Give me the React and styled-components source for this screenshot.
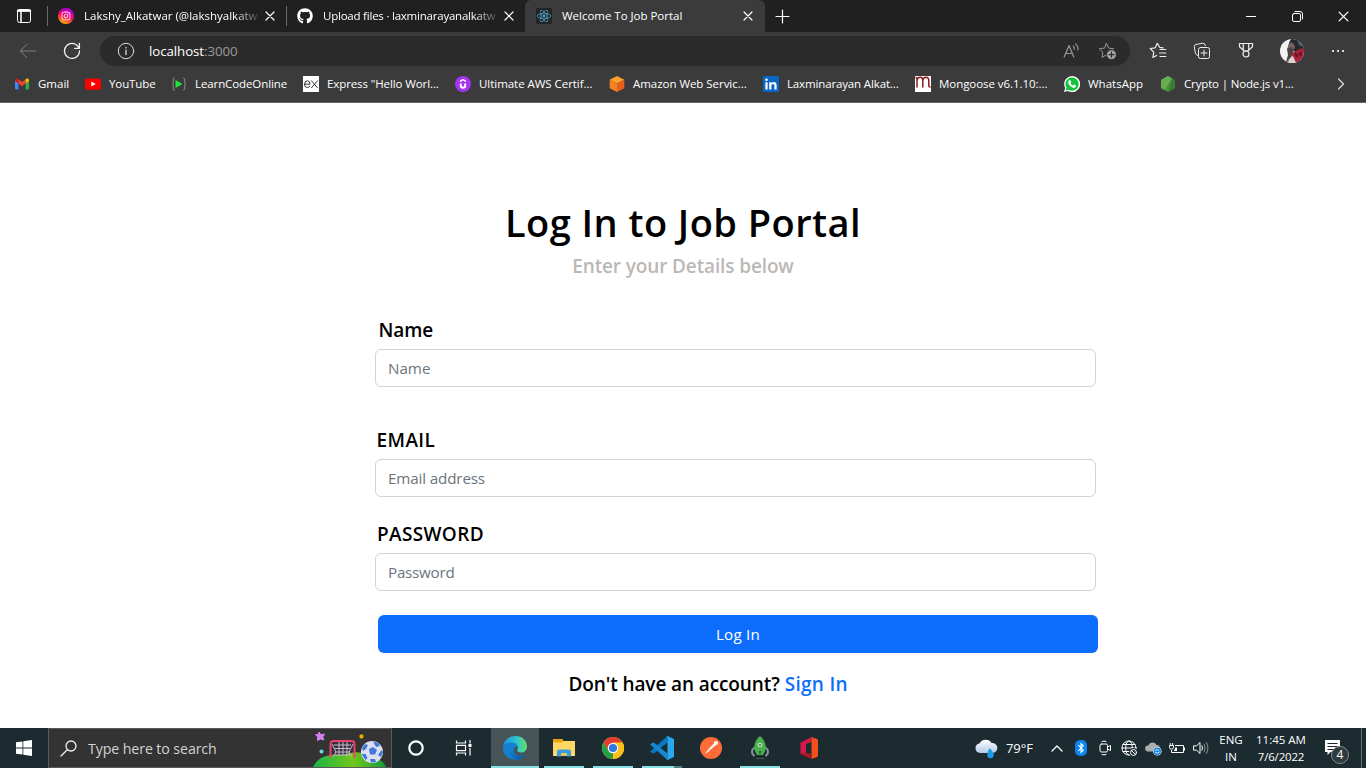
import React from "react";
import styled, { createGlobalStyle } from "styled-components";
import { FaGithub, FaReact, FaInstagram } from "react-icons/fa";

const Global = createGlobalStyle`
  * { box-sizing: border-box; }
  html, body { margin: 0; height: 768px; overflow: hidden; background: #fff; }
  body { font-family: "Open Sans", "Noto Sans", sans-serif; }
  svg { display: block; flex: none; }
  input, button { font-family: inherit; }
`;

const Screen = styled.div`
  width: 1366px;
  height: 768px;
  display: flex;
  flex-direction: column;
  overflow: hidden;
`;

const Text = styled.span`
  font-size: ${(p) => p.$size || 11.5}px;
  letter-spacing: ${(p) => p.$track || 0}px;
  color: ${(p) => p.$color || "#fff"};
  white-space: nowrap;
`;

/* ---------- Browser chrome ---------- */

const TabStrip = styled.header`
  height: 32px;
  flex: none;
  display: flex;
  align-items: center;
  background: #202020;
`;

const TabActions = styled.div`
  width: 47px;
  height: 32px;
  display: flex;
  align-items: center;
  justify-content: center;
`;

const Tab = styled.div`
  width: ${(p) => p.$width}px;
  height: 32px;
  display: flex;
  align-items: center;
  padding-left: ${(p) => p.$inset || 10}px;
  border-radius: ${(p) => (p.$active ? "6px 6px 0 0" : "0")};
  background: ${(p) => (p.$active ? "#3b3b3b" : "transparent")};
`;

const TabTitle = styled.div`
  width: 176px;
  margin: 0 5px 0 10px;
  line-height: 20px;
  white-space: nowrap;
  display: flex;
  ${(p) => p.$fade && "mask-image: linear-gradient(90deg, #000 150px, transparent 178px);"}
`;

const Separator = styled.div`
  width: 1px;
  height: 20px;
  background: #6b6b6b;
`;

const NewTab = styled.div`
  width: 34px;
  display: flex;
  justify-content: center;
`;

const WindowControls = styled.div`
  margin-left: auto;
  display: flex;
`;

const WindowButton = styled.div`
  width: 46px;
  height: 32px;
  display: flex;
  align-items: center;
  justify-content: center;
`;

const Toolbar = styled.div`
  height: 37px;
  flex: none;
  display: flex;
  align-items: center;
  padding-left: 16px;
  background: #3b3b3b;
`;

const ToolButton = styled.div`
  width: ${(p) => p.$width || 44}px;
  height: 30px;
  display: flex;
  align-items: center;
  justify-content: ${(p) => p.$align || "flex-start"};
`;

const AddressBar = styled.div`
  width: 1030px;
  height: 30px;
  margin-top: 1px;
  padding: 0 13px 0 17px;
  display: flex;
  align-items: center;
  border-radius: 15px;
  background: #2b2b2b;
`;

const Url = styled.div`
  margin-left: 14px;
  flex: 1;
  display: flex;
`;

const AddressActions = styled.div`
  display: flex;
  gap: 18px;
`;

const Bookmarks = styled.nav`
  height: 34px;
  flex: none;
  display: flex;
  align-items: center;
  padding: 0 0 4px 14px;
  background: #3b3b3b;
  border-bottom: 1px solid #666;
`;

const Bookmark = styled.div`
  width: ${(p) => p.$width}px;
  display: flex;
  align-items: center;
  gap: 8px;
`;

const More = styled.div`
  margin-left: auto;
  padding-right: 21px;
`;

const Avatar = styled.div`
  width: 24px;
  height: 24px;
  border-radius: 50%;
  overflow: hidden;
`;

/* ---------- Login page ---------- */

const Page = styled.main`
  flex: 1;
  background: #fff;
  display: flex;
  flex-direction: column;
`;

const Title = styled.h1`
  margin: 95px 0 0;
  height: 48px;
  font-size: 38px;
  line-height: 48px;
  font-weight: 600;
  letter-spacing: ${(p) => p.$track}px;
  text-align: center;
  color: #000;
`;

const Subtitle = styled.h5`
  margin: 8px 0 0;
  height: 24px;
  font-size: 19px;
  line-height: 24px;
  font-weight: 600;
  letter-spacing: ${(p) => p.$track}px;
  text-align: center;
  color: #bbb8b6;
`;

const Form = styled.form`
  margin: 40px 0 0 375px;
  width: 723px;
  display: flex;
  flex-direction: column;
`;

const Field = styled.div`
  display: flex;
  flex-direction: column;
  margin-bottom: ${(p) => p.$gap}px;
`;

const Label = styled.label`
  height: 24px;
  margin: 0 0 7px;
  padding-left: ${(p) => p.$inset}px;
  font-size: 19px;
  line-height: 24px;
  font-weight: 600;
  letter-spacing: ${(p) => p.$track}px;
  color: #000;
`;

const Input = styled.input`
  width: 721px;
  height: 38px;
  padding: 0 12px;
  border: 1px solid #ced4da;
  border-radius: 6px;
  font-size: 15.2px;
  letter-spacing: ${(p) => p.$track}px;
  background: #fff;
  &::placeholder { color: #6c757d; opacity: 1; }
`;

const Submit = styled.button`
  width: 720px;
  height: 38px;
  margin-left: 3px;
  padding: 0;
  border: 0;
  border-radius: 6px;
  background: #0d6efd;
  color: #fff;
  font-size: 15.2px;
  letter-spacing: ${(p) => p.$track}px;
`;

const Prompt = styled.p`
  margin: 19px 0 0 193.5px;
  height: 24px;
  display: flex;
  gap: 5px;
  font-size: 19px;
  line-height: 24px;
  font-weight: 600;
  letter-spacing: ${(p) => p.$track}px;
  white-space: nowrap;
  color: #000;
`;

const PromptLink = styled.a`
  color: #0d6efd;
  letter-spacing: 0.3px;
`;

/* ---------- Taskbar ---------- */

const Taskbar = styled.footer`
  height: 40px;
  flex: none;
  display: flex;
  background: #1b2b30;
`;

const Start = styled.div`
  width: 48px;
  display: flex;
  align-items: center;
  justify-content: center;
`;

const Search = styled.div`
  width: 344px;
  height: 40px;
  display: flex;
  align-items: center;
  border: 1px solid #5a5a5a;
  padding-left: 11px;
  background: #333;
`;

const SearchText = styled.div`
  flex: 1;
  margin-left: 11px;
  display: flex;
`;

const TaskButton = styled.div`
  width: ${(p) => p.$width}px;
  height: 40px;
  display: flex;
  align-items: center;
  justify-content: center;
  padding-right: ${(p) => p.$nudge || 0}px;
`;

const RunningApp = styled.div`
  width: ${(p) => (p.$active ? 48 : 40)}px;
  height: 40px;
  margin-right: ${(p) => (p.$active ? 5 : 9)}px;
  display: flex;
  align-items: center;
  justify-content: center;
  background: ${(p) => (p.$active ? "#465458" : "transparent")};
  border-bottom: 2px solid ${(p) => (p.$idle ? "transparent" : "#88e0e4")};
  ${(p) => p.$stacked && "border-image: linear-gradient(90deg, #88e0e4 31px, #527d82 31px) 2;"}
  svg { margin-top: 2px; }
`;

const Tray = styled.div`
  margin-left: auto;
  display: flex;
  align-items: center;
`;

const TrayItem = styled.div`
  width: ${(p) => p.$width || 24}px;
  display: flex;
  align-items: center;
  justify-content: center;
  padding-right: ${(p) => p.$nudge || 0}px;
`;

const Stack = styled.div`
  width: ${(p) => p.$width}px;
  display: flex;
  flex-direction: column;
  align-items: center;
  line-height: 17px;
`;

const Notification = styled.div`
  position: relative;
  width: 48px;
  height: 40px;
  padding: 11px 0 0 11px;
`;

const Badge = styled.span`
  position: absolute;
  left: 18px;
  top: 18px;
  width: 18px;
  height: 18px;
  border: 1px solid #858b8c;
  border-radius: 50%;
  background: #303a3d;
  color: #fff;
  font-size: 12px;
  line-height: 16px;
  text-align: center;
`;

const DesktopEdge = styled.div`
  width: 5px;
  height: 40px;
  border-left: 1px solid #627075;
`;

/* ---------- Icons ---------- */

const Line = ({ w = 16, h = 16, box, color = "#fff", sw = 1, children }) => (
  <svg width={w} height={h} viewBox={box || `0 0 ${w} ${h}`} fill="none" stroke={color} strokeWidth={sw} strokeLinecap="round" strokeLinejoin="round">
    {children}
  </svg>
);

const CloseIcon = ({ size = 10 }) => (
  <Line w={size} h={size} box="0 0 10 10" sw={1.2}><path d="M1 1l8 8M9 1L1 9" /></Line>
);

const InstaIcon = () => (
  <svg width="16" height="16" viewBox="0 0 16 16">
    <defs>
      <linearGradient id="insta" x1="0.7" y1="0" x2="0.3" y2="1">
        <stop offset="0" stopColor="#a000e8" /><stop offset="0.5" stopColor="#f40870" /><stop offset="0.8" stopColor="#ff6b16" /><stop offset="1" stopColor="#ffc800" />
      </linearGradient>
    </defs>
    <circle cx="8" cy="8" r="8" fill="url(#insta)" />
    <FaInstagram x="3" y="3" size={10} color="#fff" />
  </svg>
);

const ReactBadge = () => (
  <svg width="16" height="16" viewBox="0 0 16 16">
    <rect width="16" height="16" rx="1.5" fill="#20232a" />
    <FaReact x="1" y="1" size={14} color="#4fb0ca" />
  </svg>
);

const GmailIcon = () => (
  <svg width="16" height="16" viewBox="0 0 16 16">
    <path d="M1 4v8.5q0 1 1 1h2.4V6.8z" fill="#4285f4" />
    <path d="M15 4v8.5q0 1-1 1h-2.4V6.8z" fill="#34a853" />
    <path d="M4.4 3.2L8 6l3.6-2.8v4.3L8 10.3 4.4 7.5z" fill="#ea4335" />
    <path d="M1 4.2C1 2.5 2.8 2 4 2.9l.4.3v4.3L1 5z" fill="#c5221f" />
    <path d="M15 4.2c0-1.7-1.8-2.2-3-1.3l-.4.3v4.3L15 5z" fill="#fbbc04" />
  </svg>
);

const YouTubeIcon = () => (
  <svg width="16" height="16" viewBox="0 0 16 16">
    <rect x="0" y="2.4" width="16" height="11.4" rx="2.8" fill="#f00" />
    <path d="M6.3 5.6v5L10.7 8z" fill="#fff" />
  </svg>
);

const LearnIcon = () => (
  <svg width="16" height="16" viewBox="0 0 16 16">
    <path d="M4 2Q2.300 2 2.300 4v2.500Q2.300 8 1 8q1.300 0 1.300 1.500V12q0 2 1.700 2M12 2q1.700 0 1.700 2v2.500Q13.700 8 15 8q-1.300 0-1.300 1.500V12q0 2-1.700 2" fill="none" stroke="#7d7d7d" strokeWidth="1.2" />
    <path d="M4.500 4v8l7-4z" fill="#22e23c" />
  </svg>
);

const ExpressIcon = () => (
  <Line color="#333">
    <rect width="16" height="16" fill="#fff" stroke="none" />
    <path d="M1.500 8.200H7Q7 4.800 4.300 4.800T1.500 8.300Q1.500 11.500 4.300 11.500 6.200 11.500 6.800 10.200M8.500 4.800l6 7M14.500 4.800l-6 7" />
  </Line>
);

const UdemyIcon = () => (
  <Line color="#fff" sw={2}>
    <circle cx="8" cy="8" r="8" fill="#a435f0" stroke="none" />
    <path d="M5.800 7.500v2.300q0 2 2.200 2t2.200-2V7.500" strokeLinecap="butt" />
    <path d="M5.500 5.200L8 3.700l2.500 1.500" strokeWidth="1.4" />
  </Line>
);

const AwsIcon = () => (
  <svg width="16" height="16" viewBox="0 0 16 16">
    <path d="M8 0l7.300 3.700L8 7.500.7 3.700z" fill="#ffa12b" />
    <path d="M.7 3.700L8 7.500V16L.7 12.200z" fill="#f58220" />
    <path d="M15.300 3.700L8 7.500V16l7.300-3.800z" fill="#e8601c" />
  </svg>
);

const LinkedInIcon = () => (
  <svg width="16" height="16" viewBox="0 0 16 16">
    <rect width="16" height="16" rx="1" fill="#0a66c2" />
    <circle cx="3.500" cy="3.700" r="1.300" fill="#fff" />
    <path d="M2.400 6.200h2.200v7.300H2.400zM6.200 6.200h2.100v1Q9 6 10.600 6q3 0 3 3.300v4.200h-2.200V9.700q0-1.800-1.400-1.800-1.600 0-1.600 1.900v3.700H6.200z" fill="#fff" />
  </svg>
);

const MongooseIcon = () => (
  <Line color="#8d1a1a" sw={1.5}>
    <rect width="16" height="16" fill="#fff" stroke="none" />
    <path d="M2 11V3Q2 1.800 1 1.500M2 4q.8-2.700 3.200-2.700T7.800 4v7M7.800 4q.8-2.700 3.200-2.700T13.800 4v6q0 1 1.200 1" />
  </Line>
);

const WhatsAppIcon = () => (
  <svg width="16" height="16" viewBox="0 0 16 16">
    <path d="M0 16l1.200-4A8 8 0 1 1 4 14.900z" fill="#fff" />
    <path d="M1.500 14.500l.9-3A6.600 6.600 0 1 1 4.600 13.700z" fill="#12c23c" />
    <path d="M5.200 4.200l1-.1 1 2.100-.7 1q.9 1.700 2.600 2.400l.9-1 2 1q.1 1.700-1.500 2.200-2 .5-4.400-1.700T4.200 5.800q.1-1 1-1.600z" fill="#fff" />
  </svg>
);

const NodeIcon = () => (
  <svg width="16" height="16" viewBox="0 0 16 16">
    <path d="M8 0l7 4v8l-7 4-7-4V4z" fill="#4d9341" /><path d="M1 4l7-4 4 2.300L4.500 14 1 12z" fill="#6cac50" /><path d="M8 16l7-4V4l-3-1.700z" fill="#3c7b37" />
  </svg>
);

const InfoIcon = () => (
  <Line w={18} h={18} color="#ddd"><circle cx="9" cy="9" r="7.700" /><path d="M9 8.200v4.300M9 5.500v.4" strokeWidth="1.300" /></Line>
);

const BackIcon = () => <Line w={24} h={18} color="#818181"><path d="M20 9H4.500M11 2.200L4.300 9l6.700 6.800" /></Line>;

const ReloadIcon = () => (
  <Line w={18} h={18} color="#f4f4f4" sw={1.300}><path d="M16 6.200A7.500 7.500 0 1 0 16.500 9M16.400 1.500v4.800h-4.800" /></Line>
);

const ReadAloudIcon = () => (
  <Line w={17} h={18} color="#999" sw={1.200}><path d="M1.200 15L6 3.500 10.800 15M2.800 11.500h6.500M10.300 4.200q1.200 1.200 1 3M12.500 1.900q3 2.400 2.400 6" /></Line>
);

const starPath = "M8.500 1.500l2.200 4.600 5 .7-3.600 3.500.9 5-4.500-2.400-4.500 2.400.9-5L1.300 6.800l5-.7z";

const AddStarIcon = () => (
  <Line w={19} h={18} color="#999">
    <path d={starPath} />
    <circle cx="13.500" cy="12.700" r="5" fill="#a5a5a5" stroke="#2b2b2b" />
    <path d="M13.500 10.200v5M11 12.700h5" stroke="#2b2b2b" strokeWidth="1.200" />
  </Line>
);

const FavoritesIcon = () => (
  <Line w={18} h={18} color="#eee" sw={1.200}><path d="M14 5.800l-3.400-.5L8.300 1.300 6.200 5.800l-5 .7 3.600 3.700-.9 5.300 3.700-2.100M11 7.500h5.800M10.500 11h6.300M11 14.500h5.800" /></Line>
);

const CollectionsIcon = () => (
  <Line w={18} h={18} color="#eee">
    <path d="M4.700 13.500Q2.600 12.700 2.300 10.500L1.300 4.800Q1 3 3 2.500l6.500-1.300Q12 .9 12.400 3.500" />
    <rect x="5.500" y="5.500" width="11" height="11" rx="2" /><path d="M11 8v6M8 11h6" />
  </Line>
);

const RewardsIcon = () => (
  <Line w={16} h={17} color="#eee" sw={1.200}><path d="M1.500 1.500h13v3.300L9.800 9H6.200L1.500 4.800zM5.300 1.500V8M10.700 1.500V8" /><circle cx="8" cy="12" r="3" /></Line>
);

const AvatarArt = () => (
  <svg width="24" height="24" viewBox="0 0 24 24">
    <rect width="24" height="24" fill="#f3f1f1" />
    <path d="M11 0h13v12l-8 2-4-4-4-1 1-5z" fill="#23292c" />
    <path d="M9 5l3-2 3 4-1 4-4 1-3-2z" fill="#7a5f5c" />
    <path d="M7 10l4-2 3 3-2 5-2 6-4 1 2-7z" fill="#4c4246" />
    <path d="M12 14l4-2 6-3 2 2v9l-7 4-5-4z" fill="#b02038" />
    <path d="M15 14l3 1 0 4-3-2zM20 12l2 2-1 4-2-2z" fill="#5d1720" />
    <path d="M9 20l4-3 3 7H8z" fill="#d9d4d5" />
    <path d="M17 1q5 3 6 7l-4-2z" fill="#50686c" />
  </svg>
);

const WindowsIcon = () => (
  <svg width="16" height="16" viewBox="0 0 16 16" fill="#fff"><path d="M0 2.300l6.500-.9v6.200H0zM7.300 1.300L16 0v7.600H7.300zM0 8.400h6.500v6.200L0 13.700zM7.300 8.400H16V16l-8.700-1.300z" /></svg>
);

const SearchIcon = () => <Line w={17} h={17} color="#eee" sw={1.300}><circle cx="11" cy="6" r="5" /><path d="M7.300 9.700L1 16" /></Line>;

const SoccerArt = () => (
  <svg width="79" height="38" viewBox="0 0 79 38">
    <defs><linearGradient id="hill"><stop offset="0" stopColor="#19b448" /><stop offset="0.55" stopColor="#70c719" /><stop offset="1" stopColor="#119d3c" /></linearGradient></defs>
    <path d="M1 38C7 26 18 25 31 26c13-5 22-3 30 3 7 1 11 4 13 9z" fill="url(#hill)" />
    <path d="M7 3l2 2.800L12.500 5l-1.800 3L12 11 8.500 10 5.500 11.500 5.800 8 3.500 5.500 6.500 5.500z" fill="#d583f0" stroke="#d583f0" strokeLinejoin="round" />
    <rect x="47.500" y="5.500" width="4" height="4" rx="1.400" fill="#f5a800" />
    <circle cx="9.500" cy="22.500" r="2" fill="#72d4dc" />
    <path d="M20 15l4 8-3 5M41 15l-4 8 3 5M22 16h17M23 19.500h15M23 23h15M27 13v13M31 13v13M35 13v13M23 26h15" fill="none" stroke="#cdb8d6" />
    <path d="M18.500 28V15q0-3 3-3h18q3 0 3 3v13" fill="none" stroke="#ef3f72" strokeWidth="2" strokeLinecap="round" />
    <circle cx="60" cy="23" r="11" fill="#dcdff0" />
    <path d="M57 20l4-2 4 3-2 4.500-5 0zM50 19l3-4 3 1-2 4-3 2zM61 12.500l5 1.500 2 3-4 1zM69.500 21l1.500 2-2 5-3-2zM49.500 25l4 0 2 4-2 2zM58 30l5 0 1 3-5 .5z" fill="#3e78df" />
  </svg>
);

const CortanaIcon = () => <Line w={18} h={18} sw={2.200}><circle cx="9" cy="9" r="6.700" /></Line>;

const TaskViewIcon = () => (
  <Line w={17} h={16} sw={1.200}>
    <path d="M1.500 .5v2.500h9V.5M1.500 15.500V13h9v2.500M1.500 5.300h9v5.400h-9zM15 0v3.500M15 8v7.500" strokeLinecap="butt" strokeLinejoin="miter" /><rect x="13.500" y="4" width="3" height="3" fill="#fff" stroke="none" />
  </Line>
);

const EdgeIcon = () => (
  <svg width="24" height="24" viewBox="0 0 24 24">
    <defs>
      <linearGradient id="edgeTop" x1="0" x2="1"><stop offset="0" stopColor="#1d91df" /><stop offset="0.6" stopColor="#30c6cb" /><stop offset="1" stopColor="#66e069" /></linearGradient>
      <linearGradient id="edgeLow" x1="0" y1="0" x2="1" y2="1"><stop offset="0" stopColor="#1689d8" /><stop offset="1" stopColor="#0854a4" /></linearGradient>
    </defs>
    <path d="M0 11C1 3.500 6.500 0 12.500 0 19.500 0 24 5 24 10.500c0 4-3 6-6 6-3.500 0-4.700-1.500-3.500-3 1-1.700.2-6.500-6-6.500C4 7 1 9 0 11z" fill="url(#edgeTop)" />
    <path d="M0 11c1.200-3 4.700-4.500 8.200-4.500 4 0 6.600 2.300 6.600 5-5-2.500-8 .5-6.500 4.500 1.600 4 7 5.500 13.800 3C17 27 0 25.500 0 11z" fill="#1480d0" />
    <path d="M8.500 9.500c-4 3.500-2.500 13 5.500 14 4 .2 7-2.300 8.500-5-5 2.500-11.500 1-11.500-4.300 0-1.700.8-2.700 1.600-3.400-1.500-1.300-3-1.500-4.100-1.300z" fill="url(#edgeLow)" />
  </svg>
);

const FolderIcon = () => (
  <svg width="22" height="20" viewBox="0 0 22 20">
    <path d="M0 1h9.500l1 2H22v15H0z" fill="#e8a60d" /><path d="M0 4.500h9l1.500-1.500H22v15H0z" fill="#ffd668" />
    <path d="M4 18.500v-5q0-2 2-2h10q2 0 2 2v5h-4V15H8v3.500z" fill="#3c9bdc" /><path d="M8 18v-3h6v3z" fill="#e6c25e" />
  </svg>
);

const ChromeIcon = () => (
  <svg width="22" height="22" viewBox="0 0 22 22">
    <circle cx="11" cy="11" r="11" fill="#fbc116" />
    <path d="M1.500 5.500A11 11 0 0 1 20.500 5.500L11 6 6.500 14z" fill="#e33b2e" />
    <path d="M1.500 5.500A11 11 0 0 0 11 22l4.500-8.300-8.800.3z" fill="#259e46" />
    <path d="M20.600 5.500H11v11l-.2 5.500A11 11 0 0 0 20.600 5.500z" fill="#fbc116" />
    <circle cx="11" cy="11" r="5.300" fill="#fff" /><circle cx="11" cy="11" r="4.100" fill="#3378e4" />
  </svg>
);

const CodeIcon = () => (
  <svg width="24" height="24" viewBox="0 0 24 24">
    <path d="M17.500 0v6.500L3.500 17.700 0 15.500z" fill="#0876c2" />
    <path d="M17.500 24v-6.500L3.500 6.300 0 8.500z" fill="#1688d2" />
    <path d="M17.500 0L24 3v18l-6.500 3-1-1q1 .3 1-1V2q0-1.200-1-1z" fill="#29a8ee" />
  </svg>
);

const PostmanIcon = () => (
  <svg width="22" height="22" viewBox="0 0 22 22">
    <circle cx="11" cy="11" r="11" fill="#ff6c37" />
    <path d="M8.500 12L14 6.500l2 1.500-6 5z" fill="#fff" /><circle cx="16" cy="6" r="2" fill="#fff" />
    <path d="M8.500 12l1.500 1.500-5 3.500z" fill="#fff" />
  </svg>
);

const RocketIcon = () => (
  <svg width="20" height="24" viewBox="0 0 20 24">
    <path d="M4.500 11.500q-3.500 2-2 6.500l2 2M15.500 11.500q3.500 2 2 6.500l-2 2" fill="none" stroke="#849897" strokeWidth="2" />
    <path d="M10 0q7 6 5.500 14L13 19H7l-2.500-5Q3 6 10 0z" fill="#4caf50" />
    <circle cx="10" cy="9" r="2.300" fill="#c8edca" /><circle cx="10" cy="9" r="1.300" fill="#4b9a4e" /><path d="M8.500 15h3L10 19.500z" fill="#286e30" />
    <ellipse cx="10" cy="22.500" rx="5" ry=".8" fill="#405054" />
  </svg>
);

const OfficeIcon = () => (
  <svg width="18" height="22" viewBox="0 0 18 22">
    <path d="M.5 5.500L11.500 0v5L6 7v8.500l-5 2Q.5 17 .5 16z" fill="#d51848" />
    <path d="M11.500 0L17 2q1 .5 1 1.500v15q0 1-1 1.500l-5.500 2z" fill="#f4501e" />
    <path d="M.6 17.300L5 15.800l6.500 1V22z" fill="#a81b24" />
  </svg>
);

const WeatherIcon = () => (
  <svg width="24" height="22" viewBox="0 0 24 22">
    <defs><linearGradient id="cloud" x2="0" y2="1"><stop stopColor="#fff" /><stop offset="1" stopColor="#b4c9e8" /></linearGradient></defs>
    <path d="M5 16a4.800 4.800 0 0 1-.6-9.500A7 7 0 0 1 16.600 6 5 5 0 0 1 18 16z" fill="url(#cloud)" />
    <path d="M14.500 11q4.800 4.500 4.300 7.500-.7 2.800-3.300 2.800-3-.2-3.200-3Q12.200 15.500 14.500 11z" fill="#1f9be8" />
  </svg>
);

const BluetoothIcon = () => (
  <svg width="12" height="16" viewBox="0 0 12 16"><rect width="12" height="16" rx="5" fill="#0a84ef" /><path d="M3.300 5.200l5 5L6 12.500v-9l2.300 2.300-5 5" fill="none" stroke="#fff" strokeWidth="1.100" /></svg>
);

const MeetIcon = () => <Line w={13} h={16}><rect x="1" y="4" width="7.500" height="8" rx="1.500" /><path d="M8.500 7l3-1.500v5L8.500 9M3 1.500q1.800-1.200 4 0M3 14.500q1.800 1.200 4 0" /></Line>;

const GlobeIcon = () => (
  <Line w={17} h={17}>
    <circle cx="8" cy="8" r="7" /><ellipse cx="8" cy="8" rx="3.300" ry="7" /><path d="M1 8h14M2 4.500h12M2 11.500h8" />
    <circle cx="12.500" cy="12.500" r="4.500" fill="#1b2b30" stroke="none" /><circle cx="12.500" cy="12.500" r="3" /><path d="M10.500 10.500l4 4" />
  </Line>
);

const CloudSyncIcon = () => (
  <svg width="17" height="16" viewBox="0 0 17 16">
    <path d="M3 11.500a3 3 0 0 1 .3-6A4.500 4.500 0 0 1 11.500 5a3.500 3.500 0 0 1 2 6.500z" fill="#aaaead" />
    <circle cx="12.300" cy="11.300" r="4.300" fill="#e8f2fb" /><circle cx="12.300" cy="11.300" r="3.700" fill="#1680dc" />
    <path d="M10.200 10.700q2.200-2.300 4 0M14.400 12q-2.200 2.200-4.200 0" fill="none" stroke="#fff" strokeWidth=".9" />
  </svg>
);

const BatteryIcon = () => <Line w={17} h={14}><path d="M7 4.500h8.500v7H3.500V9M16.500 6.500v3M1.500 4.500h4v2q0 1.500-2 1.500t-2-1.500zM2.300 4.500V2M4.700 4.500V2" strokeLinecap="butt" /><path d="M7 6.500h2v3.500H5.500q1.500-1 1.500-3.500z" fill="#fff" stroke="none" /></Line>;

const SpeakerIcon = () => (
  <Line w={17} h={14}><path d="M1 4.800h2.500L7 1.500v11L3.500 9.200H1zM9 4.800q1 2.200 0 4.400" /><path d="M11.200 3q2 4 0 8M13.500 1.500q3 5.500 0 11" stroke="#829094" /></Line>
);

const NoteIcon = () => (
  <svg width="17" height="17" viewBox="0 0 17 17"><path d="M1 1h15v12H6.500L3.500 16v-3H1z" fill="#fff" /><path d="M3.500 4.500h10M3.500 7.500h10M3.500 10.500h7" stroke="#1b2b30" /></svg>
);

const bookmarks = [
  { Icon: GmailIcon, name: "Gmail", width: 71, track: 0 },
  { Icon: YouTubeIcon, name: "YouTube", width: 86, track: -0.1 },
  { Icon: LearnIcon, name: "LearnCodeOnline", width: 132, track: -0.1 },
  { Icon: ExpressIcon, name: 'Express "Hello Worl...', width: 152, track: -0.1 },
  { Icon: UdemyIcon, name: "Ultimate AWS Certif...", width: 154, track: -0.04 },
  { Icon: AwsIcon, name: "Amazon Web Servic...", width: 154, track: -0.04 },
  { Icon: LinkedInIcon, name: "Laxminarayan Alkat...", width: 152, track: -0.14 },
  { Icon: MongooseIcon, name: "Mongoose v6.1.10:...", width: 149, track: -0.05 },
  { Icon: WhatsAppIcon, name: "WhatsApp", width: 96, track: 0 },
  { Icon: NodeIcon, name: "Crypto | Node.js v1...", width: 150, track: -0.15 },
];

const fields = [
  { label: "Name", hint: "Name", inset: 3.5, gap: 41, track: -0.1, hintTrack: 0, type: "text" },
  { label: "EMAIL", hint: "Email address", inset: 1.5, gap: 25, track: 0.4, hintTrack: -0.14, type: "email" },
  { label: "PASSWORD", hint: "Password", inset: 2, gap: 24, track: 0.35, hintTrack: -0.25, type: "password" },
];

export default function App() {
  return (
    <Screen>
      <Global />
      <TabStrip>
        <TabActions>
          <Line><rect x="1.500" y="1.500" width="13" height="13" rx="2" /><path d="M1.500 3h13M5 4v10" strokeWidth="1.500" /><path d="M2 2.500h12" strokeWidth="2" /></Line>
        </TabActions>
        <Separator />
        <Tab $width={238}>
          <InstaIcon />
          <TabTitle $fade><Text>Lakshy_Alkatwar (@lakshyalkatw</Text></TabTitle>
          <CloseIcon />
        </Tab>
        <Separator />
        <Tab $width={238}>
          <FaGithub size={16} color="#fff" />
          <TabTitle $fade><Text $track={-0.22}>Upload files · laxminarayanalkatw</Text></TabTitle>
          <CloseIcon />
        </Tab>
        <Tab $width={240} $inset={11} $active>
          <ReactBadge />
          <TabTitle><Text $track={-0.02}>Welcome To Job Portal</Text></TabTitle>
          <CloseIcon />
        </Tab>
        <NewTab><Line w={15} h={15} sw={1.200}><path d="M7.500 1v13M1 7.500h13" /></Line></NewTab>
        <WindowControls>
          <WindowButton><Line w={10} h={10}><path d="M0 5.500h10" strokeLinecap="butt" /></Line></WindowButton>
          <WindowButton><Line w={11} h={11}><rect x=".5" y="2.500" width="8" height="8" rx="1.500" /><path d="M3 .5h5q2.500 0 2.500 2.500v5" /></Line></WindowButton>
          <WindowButton><CloseIcon size={11} /></WindowButton>
        </WindowControls>
      </TabStrip>
      <Toolbar>
        <ToolButton $width={47}><BackIcon /></ToolButton>
        <ToolButton $width={37}><ReloadIcon /></ToolButton>
        <AddressBar>
          <InfoIcon />
          <Url><Text $size={13.300} $track={-0.08}>localhost</Text><Text $size={13.300} $track={-0.1} $color="#9a9a9a">:3000</Text></Url>
          <AddressActions><ReadAloudIcon /><AddStarIcon /></AddressActions>
        </AddressBar>
        <ToolButton $width={56} $align="center"><FavoritesIcon /></ToolButton>
        <ToolButton $width={32} $align="center"><CollectionsIcon /></ToolButton>
        <ToolButton $width={56} $align="center"><RewardsIcon /></ToolButton>
        <ToolButton $width={36} $align="center"><Avatar><AvatarArt /></Avatar></ToolButton>
        <ToolButton $width={56} $align="center"><Line w={14} h={4} sw={2}><path d="M2 2h.1M7 2h.1M12 2h.1" /></Line></ToolButton>
      </Toolbar>
      <Bookmarks>
        {bookmarks.map(({ Icon, name, width, track }) => (
          <Bookmark key={name} $width={width}><Icon /><Text $track={track}>{name}</Text></Bookmark>
        ))}
        <More><Line w={8} h={12} color="#ddd" sw={1.200}><path d="M1.500 1l5 5-5 5" /></Line></More>
      </Bookmarks>

      <Page>
        <Title $track={0.45}>Log In to Job Portal</Title>
        <Subtitle $track={-0.13}>Enter your Details below</Subtitle>
        <Form>
          {fields.map((f) => (
            <Field key={f.label} $gap={f.gap}>
              <Label $inset={f.inset} $track={f.track}>{f.label}</Label>
              <Input type={f.type} placeholder={f.hint} $track={f.hintTrack} />
            </Field>
          ))}
          <Submit type="button" $track={0.2}>Log In</Submit>
          <Prompt $track={-0.11}><span>Don't have an account?</span><PromptLink>Sign In</PromptLink></Prompt>
        </Form>
      </Page>

      <Taskbar>
        <Start><WindowsIcon /></Start>
        <Search>
          <SearchIcon />
          <SearchText><Text $size={14.200} $track={-0.1} $color="#d2d2d2">Type here to search</Text></SearchText>
          <SoccerArt />
        </Search>
        <TaskButton $width={48}><CortanaIcon /></TaskButton>
        <TaskButton $width={51} $nudge={4}><TaskViewIcon /></TaskButton>
        <RunningApp $active><EdgeIcon /></RunningApp>
        <RunningApp><FolderIcon /></RunningApp>
        <RunningApp><ChromeIcon /></RunningApp>
        <RunningApp $stacked><CodeIcon /></RunningApp>
        <RunningApp $idle><PostmanIcon /></RunningApp>
        <RunningApp><RocketIcon /></RunningApp>
        <RunningApp $idle><OfficeIcon /></RunningApp>
        <Tray>
          <WeatherIcon />
          <TrayItem $width={46} $nudge={5}><Text $size={13}>79°F</Text></TrayItem>
          <TrayItem><Line w={12} h={7} sw={1.300}><path d="M1 6l5-5 5 5" /></Line></TrayItem>
          <TrayItem><BluetoothIcon /></TrayItem>
          <TrayItem><MeetIcon /></TrayItem>
          <TrayItem><GlobeIcon /></TrayItem>
          <TrayItem><CloudSyncIcon /></TrayItem>
          <TrayItem $nudge={1}><BatteryIcon /></TrayItem>
          <TrayItem><SpeakerIcon /></TrayItem>
          <Stack $width={36}><Text>ENG</Text><Text>IN</Text></Stack>
          <Stack $width={64}><Text>11:45 AM</Text><Text $track={-0.2}>7/6/2022</Text></Stack>
          <Notification><NoteIcon /><Badge>4</Badge></Notification>
          <DesktopEdge />
        </Tray>
      </Taskbar>
    </Screen>
  );
}
